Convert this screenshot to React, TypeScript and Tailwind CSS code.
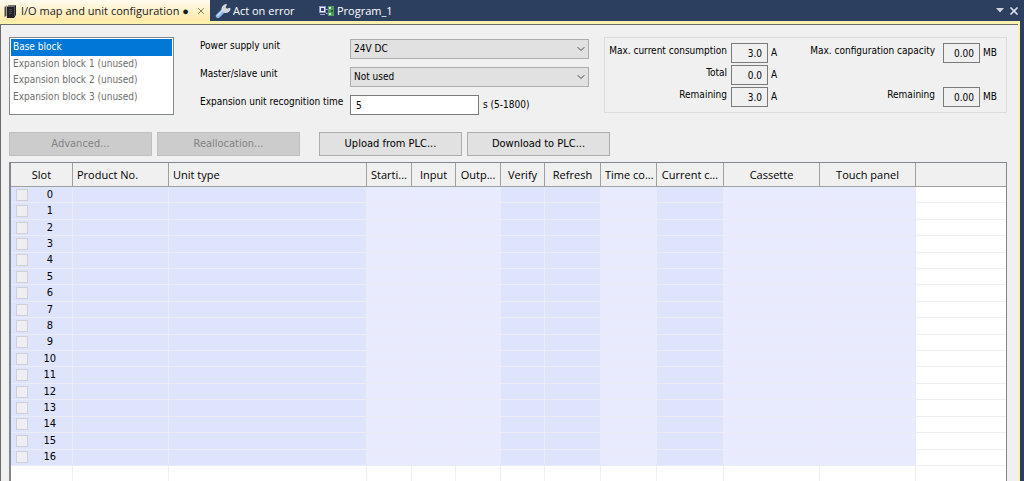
import { useState } from 'react'
import { ChevronDown, X } from 'lucide-react'

interface Column {
  title: string
  width: string
  shade: string
  align?: string
}

const blocks = ['Base block', 'Expansion block 1 (unused)', 'Expansion block 2 (unused)', 'Expansion block 3 (unused)']

const DARK = 'bg-[#dfe4fd]'
const LIGHT = 'bg-[#e8eafd]'

const columns: Column[] = [
  { title: 'Product No.', width: 'w-[96px]', shade: DARK, align: 'text-left' },
  { title: 'Unit type', width: 'w-[198px]', shade: DARK, align: 'text-left' },
  { title: 'Starti...', width: 'w-[45px]', shade: LIGHT },
  { title: 'Input', width: 'w-[44px]', shade: LIGHT },
  { title: 'Outp...', width: 'w-[45px]', shade: LIGHT },
  { title: 'Verify', width: 'w-[44px]', shade: DARK },
  { title: 'Refresh', width: 'w-[56px]', shade: DARK },
  { title: 'Time co...', width: 'w-[56px]', shade: LIGHT },
  { title: 'Current c...', width: 'w-[67px]', shade: DARK },
  { title: 'Cassette', width: 'w-[96px]', shade: LIGHT },
  { title: 'Touch panel', width: 'w-[96px]', shade: LIGHT }
]

const slots = Array.from({ length: 17 }, (_, i) => i)

function UnitIcon() {
  return (
    <svg className="shrink-0" width="13" height="16" viewBox="0 0 13 16" aria-hidden="true">
      <path d="M0 4l3-2v11l-2 1H0z" fill="#a79f8a" />
      <path d="M1.500 4v9" stroke="#4a4745" strokeWidth="1" />
      <path d="M3 4l2-2h7v10l-2 3H3z" fill="#23222a" />
      <path d="M3 4l2-2h7l-2 2z" fill="#77747a" />
      <path d="M5 6.500h3M5 8.500h3M5 10.500h3" stroke="#4d4a55" strokeWidth="1" />
      <path d="M10.500 4v9" stroke="#55525c" strokeWidth="1" />
    </svg>
  )
}

function WrenchIcon() {
  return (
    <svg className="shrink-0" width="16" height="16" viewBox="0 0 16 16" aria-hidden="true">
      <path d="M3 13L8 8" stroke="#8fb6ea" strokeWidth="4.4" strokeLinecap="round" />
      <path d="M2.600 12.400L7.400 7.600" stroke="#c6dcf7" strokeWidth="1.4" strokeLinecap="round" />
      <path d="M6.600 7.600C6 4.600 8 1.400 11.200 1L12 1.800 10.600 4.200l1.400 1.600 2.600-1 1 .8c-.2 3.200-3 5-6 4.400z" fill="#d5d8de" />
    </svg>
  )
}

function ProgramIcon() {
  return (
    <svg className="shrink-0" width="16" height="12" viewBox="0 0 16 12" aria-hidden="true">
      <rect x="0.500" y="1.500" width="6" height="6" fill="#e8ebfa" stroke="#8d97cf" />
      <rect x="2" y="3" width="3" height="3" fill="#3036a8" />
      <path d="M7 4.500h3M7 8.500h3M1 9.500h5" stroke="#9aa6c8" />
      <rect x="9" y="1" width="6" height="10" fill="#4c9a5c" />
      <rect x="10" y="2" width="2" height="2" fill="#d7f0d4" />
      <rect x="12" y="5" width="2" height="2" fill="#1f5f38" />
      <rect x="10" y="8" width="2" height="2" fill="#d7f0d4" />
    </svg>
  )
}

function SelectBox({ id, value }: { id: string; value: string }) {
  return (
    <div className="relative w-[239px]">
      <select id={id} className="block h-[20px] w-full appearance-none border border-[#adadad] bg-[#e1e1e1] pl-[3px]">
        <option>{value}</option>
      </select>
      <ChevronDown className="pointer-events-none absolute right-[2px] top-[4px] size-3 text-[#444]" strokeWidth={2} />
    </div>
  )
}

function Readout({ id, label, value, unit, gap }: { id: string; label: string; value: string; unit: string; gap: string }) {
  return (
    <div className="flex items-center">
      <label htmlFor={id} className={`${gap} flex-1 pb-1 text-right whitespace-nowrap`}>{label}</label>
      <input id={id} readOnly value={value} className="h-[20px] w-[37px] border border-[#7a7a7a] pr-[5px] text-right" />
      <span className="w-[20px] pl-[3px]">{unit}</span>
    </div>
  )
}

function PushButton({ label, disabled }: { label: string; disabled?: boolean }) {
  return (
    <button
      disabled={disabled}
      className="h-6 w-[143px] border border-[#adadad] bg-[#e1e1e1] disabled:border-[#bfbfbf] disabled:bg-[#cccccc] disabled:text-[#838383]"
    >
      {label}
    </button>
  )
}

function TabBar() {
  return (
    <div className="flex h-[21px] text-[11px] leading-[20px] text-white">
      <div className="flex w-[210px] items-center bg-gradient-to-b from-[#fffbef] to-[#ffe8a6] pl-1 text-[#1b1b1b]">
        <UnitIcon />
        <button className="pl-1 whitespace-nowrap">I/O map and unit configuration ●</button>
        <button aria-label="Close tab" className="ml-auto pr-1 text-[#75633d]">
          <X className="size-[10px]" />
        </button>
      </div>
      <button className="flex w-[107px] items-center gap-[2px] pl-[5px]">
        <WrenchIcon />
        Act on error
      </button>
      <button className="flex items-center gap-[2px] pl-[2px]">
        <ProgramIcon />
        Program_1
      </button>
      <div className="ml-auto flex items-center gap-1 pr-1">
        <button aria-label="Window list">
          <svg width="8" height="5" viewBox="0 0 8 5"><path d="M0 0h8L4 4.500z" fill="#ced4dd" /></svg>
        </button>
        <button aria-label="Close">
          <X className="size-3 text-[#dbe1ea]" strokeWidth={3.500} />
        </button>
      </div>
    </div>
  )
}

export default function App() {
  const [block, setBlock] = useState(0)

  return (
    <div className="flex h-screen flex-col overflow-hidden bg-[#2d3f5f] font-['DejaVu_Sans_Condensed','DejaVu_Sans',sans-serif] text-[10px] leading-[14px] text-black">
      <div className="font-['Open_Sans',sans-serif]">
        <TabBar />
      </div>
      <div className="mr-[4px] flex min-h-0 flex-1 flex-col border-t-[3px] border-r-2 border-[#fbf0ae]">
        <main className="flex min-h-0 flex-1 flex-col border-t border-l border-[#6b6b6b] bg-[#f0f0f0] pt-3 pr-[11px] pl-2">
          <div className="flex items-start">
            {/* Block list */}
            <div role="listbox" aria-label="Blocks" className="h-[78px] w-[165px] border border-[#828790] bg-white p-px">
              <div className="flex h-[66px] flex-col">
                {blocks.map((name, i) => (
                  <button
                    key={name}
                    role="option"
                    aria-selected={block === i}
                    onClick={() => setBlock(i)}
                    className={`flex-1 pl-[2px] text-left whitespace-nowrap ${block === i ? 'bg-[#0078d7] text-white' : 'text-[#6d6d6d]'}`}
                  >
                    {name}
                  </button>
                ))}
              </div>
            </div>

            {/* Unit settings */}
            <div className="ml-[26px] grid grid-cols-[150px_auto] gap-y-2 pt-[2px] whitespace-nowrap">
              <label htmlFor="power">Power supply unit</label>
              <SelectBox id="power" value="24V DC" />
              <label htmlFor="master">Master/slave unit</label>
              <SelectBox id="master" value="Not used" />
              <label htmlFor="recognition">Expansion unit recognition time</label>
              <div className="flex items-center">
                <input id="recognition" defaultValue="5" className="h-[20px] w-[129px] border border-[#7a7a7a] bg-white pl-[5px]" />
                <span className="pl-1">s (5-1800)</span>
              </div>
            </div>

            {/* Consumption */}
            <div className="ml-[15px] flex h-[76px] flex-1 justify-between border border-[#dcdcdc] pt-[5px] pr-[6px]">
              <div className="flex w-[183px] flex-col gap-[2px]">
                <Readout id="max-current" label="Max. current consumption" value="3.0" unit="A" gap="pr-1" />
                <Readout id="total" label="Total" value="0.0" unit="A" gap="pr-1" />
                <Readout id="remaining-current" label="Remaining" value="3.0" unit="A" gap="pr-1" />
              </div>
              <div className="flex flex-col gap-6">
                <Readout id="max-capacity" label="Max. configuration capacity" value="0.00" unit="MB" gap="pr-2" />
                <Readout id="remaining-capacity" label="Remaining" value="0.00" unit="MB" gap="pr-2" />
              </div>
            </div>
          </div>

          <div className="mt-[17px] flex text-[11px]">
            <div className="flex gap-[5px]">
              <PushButton label="Advanced..." disabled />
              <PushButton label="Reallocation..." disabled />
            </div>
            <div className="ml-[19px] flex gap-[5px]">
              <PushButton label="Upload from PLC..." />
              <PushButton label="Download to PLC..." />
            </div>
          </div>

          {/* Slots */}
          <div className="mt-[6px] min-h-0 flex-1 overflow-hidden border-t border-r border-l-2 border-[#828790] bg-white">
            <table className="w-full table-fixed border-separate border-spacing-0 text-[11px]">
              <thead className="font-['Open_Sans',sans-serif]">
                <tr className="h-6 bg-[#f0f0f0]">
                  <th className="w-[62px] border-r border-b border-[#a0a0a0] p-0 font-normal">Slot</th>
                  {columns.map((col) => (
                    <th
                      key={col.title}
                      className={`${col.width} ${col.align ?? 'text-center'} border-r border-b border-[#a0a0a0] px-1 font-normal whitespace-nowrap`}
                    >
                      {col.title}
                    </th>
                  ))}
                  <th className="border-b border-[#a0a0a0] p-0" />
                </tr>
              </thead>
              <tbody className="h-[295px]">
                {slots.map((slot) => (
                  <tr key={slot}>
                    <td className={`border-r border-b border-[#ebecf5] p-0 ${DARK}`}>
                      <label className="flex h-[15px] items-center pl-[5px]">
                        <input type="checkbox" disabled className="size-3 appearance-none border border-[#cfcfd8] bg-[#efeff3]" />
                        <span className="w-[46px] text-center">{slot}</span>
                      </label>
                    </td>
                    {columns.map((col) => (
                      <td key={col.title} className={`border-r border-b border-[#ebecf5] p-0 ${col.shade}`} />
                    ))}
                    <td className="border-b border-[#efefef] p-0" />
                  </tr>
                ))}
                <tr>
                  <td className="h-4 border-r border-[#efefef] p-0" />
                  {columns.map((col) => (
                    <td key={col.title} className="border-r border-[#efefef] p-0" />
                  ))}
                  <td />
                </tr>
              </tbody>
            </table>
          </div>
        </main>
      </div>
    </div>
  )
}
